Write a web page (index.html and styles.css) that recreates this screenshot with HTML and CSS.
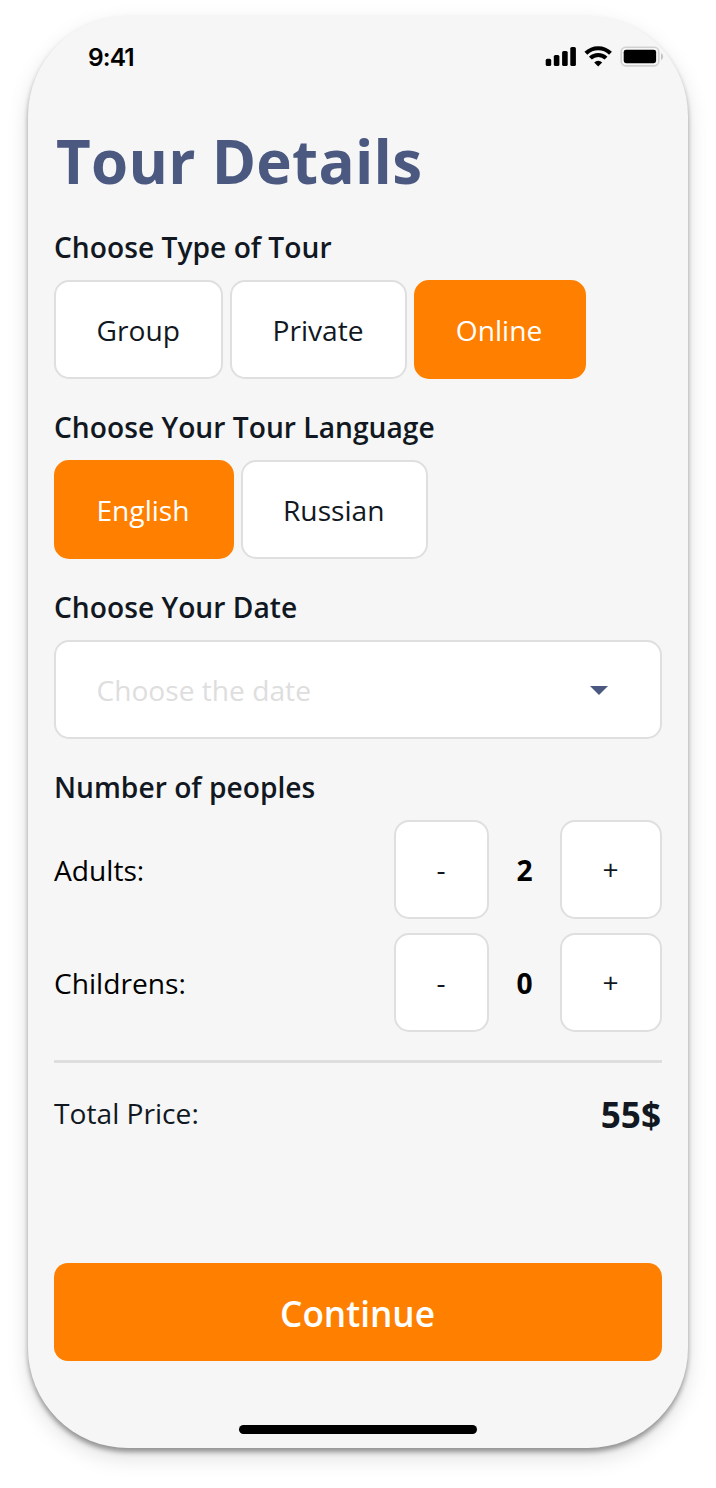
FILE: index.html
```html
<!DOCTYPE html>
<html lang="en">
<head>
<meta charset="utf-8">
<title>Tour Details</title>
<link rel="stylesheet" href="styles.css">
</head>
<body>
<main class="phone">
  <header class="status">
    <span class="time">9:41</span>
    <svg class="status-icons" width="120" height="24" viewBox="0 0 120 24">
      <rect x="1.7" y="14.8" width="5.5" height="7.2" rx="1.6"/>
      <rect x="9.8" y="11" width="5.6" height="11" rx="1.6"/>
      <rect x="18.1" y="7" width="5.6" height="15" rx="1.6"/>
      <rect x="26.3" y="3" width="5.6" height="19" rx="1.6"/>
      <g fill="none" stroke="#000" stroke-width="4.1">
        <path d="M41.9 9.2a17.6 17.6 0 0 1 24.6 0"/>
        <path d="M46.4 14.1a11.2 11.2 0 0 1 15.6 0"/>
      </g>
      <path d="M54.2 22.4l-4-4a5.8 5.8 0 0 1 8 0z"/>
      <rect x="77.2" y="3.2" width="37.6" height="18.7" rx="4.6" fill="none" stroke="#d1d1d1" stroke-width="1.6"/>
      <rect x="79.7" y="5.8" width="32.4" height="13.4" rx="2.4"/>
      <path d="M117 9.3c2.8 1 2.8 5.7 0 6.7z" fill="#c4c4c4"/>
    </svg>
  </header>
  <h1 class="title">Tour Details</h1>
  <section class="section">
    <h2 class="label">Choose Type of Tour</h2>
    <div class="options">
      <button class="option group">Group</button>
      <button class="option private">Private</button>
      <button class="option online selected">Online</button>
    </div>
  </section>
  <section class="section">
    <h2 class="label">Choose Your Tour Language</h2>
    <div class="options">
      <button class="option english selected">English</button>
      <button class="option russian">Russian</button>
    </div>
  </section>
  <section class="section">
    <h2 class="label">Choose Your Date</h2>
    <button class="option date">
      <span>Choose the date</span>
      <svg class="caret" width="18" height="9" viewBox="0 0 18 9"><path d="M0 0h18L9 9z" fill="#4b5981"/></svg>
    </button>
  </section>
  <section class="people">
    <h2 class="label">Number of peoples</h2>
    <div class="counter">
      <span class="who">Adults:</span>
      <button class="option minus">-</button>
      <span class="count">2</span>
      <button class="option plus">+</button>
    </div>
    <div class="counter">
      <span class="who">Childrens:</span>
      <button class="option minus">-</button>
      <span class="count">0</span>
      <button class="option plus">+</button>
    </div>
  </section>
  <div class="total">
    <span>Total Price:</span>
    <strong class="price">55$</strong>
  </div>
  <button class="continue">Continue</button>
  <div class="home-bar"></div>
</main>
</body>
</html>
```
FILE: styles.css
```css
* { box-sizing: border-box; }

body {
  margin: 0;
  padding: 16px 28px 40px;
  background: #fff;
  font-family: "Open Sans", sans-serif;
  font-size: 28.16px;
  color: #111822;
}

.phone {
  display: flex;
  flex-direction: column;
  width: 660px;
  height: 1432px;
  padding: 0 26px;
  border-radius: 100px;
  background: #f6f6f6;
  box-shadow: 0 4px 5px rgba(0, 0, 0, .36), 0 9px 22px rgba(0, 0, 0, .13);
}

button {
  font: inherit;
  color: inherit;
}

.status {
  display: flex;
  justify-content: space-between;
  align-items: center;
  height: 80px;
  padding: 0 0 0 34px;
}

.time {
  padding-top: 1px;
  font: 600 24.5px/30px Inter, sans-serif;
  letter-spacing: -.9px;
  color: #000;
}

.status-icons { margin-right: -2px; }

.title {
  height: 96px;
  margin: 17px 0 0;
  padding-left: 2px;
  font-size: 60px;
  font-weight: 700;
  line-height: 96px;
  letter-spacing: .3px;
  white-space: nowrap;
  color: #4b5981;
}

.section { height: 180px; }

.title + .section { margin-top: 18px; }

.label {
  height: 40px;
  margin: 0 0 13px;
  font-size: 28.16px;
  font-weight: 600;
  line-height: 40px;
  letter-spacing: .02px;
  white-space: nowrap;
}

.options {
  display: flex;
  gap: 7px;
}

.option {
  height: 99px;
  padding: 0 .5px 0 0;
  border: 2px solid #dfdfdf;
  border-radius: 15px;
  background: #fff;
  text-align: center;
}

.selected {
  border-color: #ff8000;
  background: #ff8000;
  color: #fff;
}

.group { width: 169px; }
.private { width: 176.6px; }
.online { width: 172.4px; padding-right: 1.5px; }
.english { width: 179.5px; padding-right: 1.5px; }
.russian { width: 187px; }

.date {
  display: flex;
  justify-content: space-between;
  align-items: center;
  width: 608px;
  padding: 0 52px 0 40.4px;
  color: #dedede;
}

.caret { margin-top: 1px; }

.people { height: 293px; }

.counter {
  display: flex;
  align-items: center;
  height: 99px;
  margin-bottom: 14px;
  color: #000;
}

.counter .option {
  padding: 0 1px 1px 0;
  color: #111822;
}

.who { flex: 1; }

.minus { width: 95px; }

.count {
  width: 71px;
  font-weight: 700;
  text-align: center;
}

.plus { width: 102px; }

.total {
  display: flex;
  justify-content: space-between;
  align-items: center;
  height: 109px;
  padding-bottom: 6px;
  border-top: 3px solid #dedede;
}

.price {
  padding: 1px 1px 0 0;
  font-size: 35.2px;
}

.continue {
  width: 608px;
  height: 98px;
  margin-top: 94px;
  padding: 2px 1px 0 0;
  border: 0;
  border-radius: 14px;
  background: #ff8000;
  color: #fff;
  font-size: 35.2px;
  font-weight: 600;
}

.home-bar {
  align-self: center;
  width: 238px;
  height: 9px;
  margin-top: 64px;
  border-radius: 5px;
  background: #000;
}
```
